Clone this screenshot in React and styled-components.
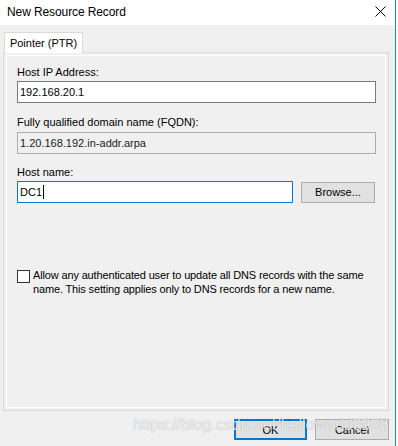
import React from "react";
import styled, { createGlobalStyle } from "styled-components";

const GlobalStyle = createGlobalStyle`
  html, body {
    margin: 0;
    padding: 0;
    background: #ffffff;
    overflow: hidden;
  }
  * {
    box-sizing: border-box;
  }
`;

const Screen = styled.div`
  display: flex;
  width: 398px;
  height: 446px;
  font-family: "Liberation Sans", Arial, sans-serif;
  font-size: 11px;
  color: #000;
`;

const Window = styled.div`
  width: 396px;
  height: 100%;
  display: flex;
  flex-direction: column;
  background: #f0f0f0;
  border-right: 1px solid #1883d7;
`;

const BehindStrip = styled.div`
  flex: 1;
  background: #fbfbfb;
`;

const TitleBar = styled.div`
  height: 25px;
  flex-shrink: 0;
  display: flex;
  align-items: center;
  justify-content: space-between;
  padding: 0 9px 2px 7px;
  background: #ffffff;
  font-size: 12px;
  letter-spacing: -0.1px;
`;

const Body = styled.div`
  position: relative;
  flex: 1;
  display: flex;
  flex-direction: column;
  padding: 7px 6px 0 3px;
`;

const TabStrip = styled.div`
  display: flex;
  padding-left: 1px;
`;

const Tab = styled.div`
  position: relative;
  z-index: 1;
  width: 79px;
  height: 21px;
  margin-bottom: -1px;
  padding-top: 4px;
  text-align: center;
  background: #ffffff;
  border: 1px solid #d9d9d9;
  border-bottom: none;
`;

const Panel = styled.div`
  height: 359px;
  display: flex;
  padding: 2px;
  border: 1px solid #d9d9d9;
  background: #f0f0f0;
`;

const Page = styled.div`
  flex: 1;
  display: flex;
  flex-direction: column;
  padding: 10px 9px 0 10px;
  border: 1px solid #ffffff;
`;

const Label = styled.div`
  line-height: 13px;
  height: 13px;
  margin-top: ${(p) => p.$top || 0}px;
  margin-bottom: ${(p) => p.$bottom || 2}px;
`;

const TextBox = styled.div`
  height: 22px;
  width: ${(p) => (p.$width ? `${p.$width}px` : "100%")};
  display: flex;
  align-items: center;
  padding-left: 2px;
  background: ${(p) => (p.$disabled ? "#f0f0f0" : "#ffffff")};
  border: 1px solid
    ${(p) => (p.$focused ? "#0078d7" : p.$disabled ? "#acacac" : "#7a7a7a")};
  color: ${(p) => (p.$disabled ? "#1a1a1a" : "#000")};
`;

const Caret = styled.span`
  display: inline-block;
  width: 1px;
  height: 14px;
  margin-left: 1px;
  background: #000;
`;

const InlineRow = styled.div`
  display: flex;
  align-items: center;
  gap: 8px;
`;

const Button = styled.div`
  width: ${(p) => p.$width || 74}px;
  height: 21px;
  display: flex;
  align-items: center;
  justify-content: center;
  background: #e1e1e1;
  border: ${(p) => (p.$default ? "2px solid #0078d7" : "1px solid #adadad")};
`;

const CheckRow = styled.div`
  display: flex;
  align-items: flex-start;
  gap: 3px;
  margin-top: 65px;
`;

const CheckBox = styled.div`
  width: 13px;
  height: 13px;
  flex-shrink: 0;
  margin-top: 2px;
  background: #ffffff;
  border: 1px solid #333333;
`;

const CheckText = styled.div`
  line-height: 14px;
  letter-spacing: -0.15px;
`;

const ButtonRow = styled.div`
  display: flex;
  justify-content: flex-end;
  gap: 8px;
  margin-top: 8px;
`;

const Watermark = styled.div`
  position: absolute;
  left: 133px;
  top: 391px;
  font-size: 16px;
  line-height: 18px;
  color: rgba(255, 255, 255, 0.82);
  text-shadow: 0 0 1px rgba(0, 0, 0, 0.35);
  pointer-events: none;
  white-space: nowrap;
`;

function CloseIcon() {
  return (
    <svg width="11" height="11" viewBox="0 0 11 11">
      <path d="M0.5 0.5 L10.5 10.5 M10.5 0.5 L0.5 10.5" stroke="#000" strokeWidth="1" />
    </svg>
  );
}

export default function App() {
  return (
    <Screen>
      <GlobalStyle />
      <Window>
        <TitleBar>
          <span>New Resource Record</span>
          <CloseIcon />
        </TitleBar>
        <Body>
          <TabStrip>
            <Tab>Pointer (PTR)</Tab>
          </TabStrip>
          <Panel>
            <Page>
              <Label>Host IP Address:</Label>
              <TextBox>192.168.20.1</TextBox>

              <Label $top={13} $bottom={3}>Fully qualified domain name (FQDN):</Label>
              <TextBox $disabled>1.20.168.192.in-addr.arpa</TextBox>

              <Label $top={12}>Host name:</Label>
              <InlineRow>
                <TextBox $width={276} $focused>
                  DC1
                  <Caret />
                </TextBox>
                <Button>Browse...</Button>
              </InlineRow>

              <CheckRow>
                <CheckBox />
                <CheckText>
                  Allow any authenticated user to update all DNS records with the same
                  <br />
                  name. This setting applies only to DNS records for a new name.
                </CheckText>
              </CheckRow>
            </Page>
          </Panel>
          <ButtonRow>
            <Button $width={73} $default>OK</Button>
            <Button>Cancel</Button>
          </ButtonRow>
          <Watermark>https://blog.csdn.net/helloworld9998</Watermark>
        </Body>
      </Window>
      <BehindStrip />
    </Screen>
  );
}
